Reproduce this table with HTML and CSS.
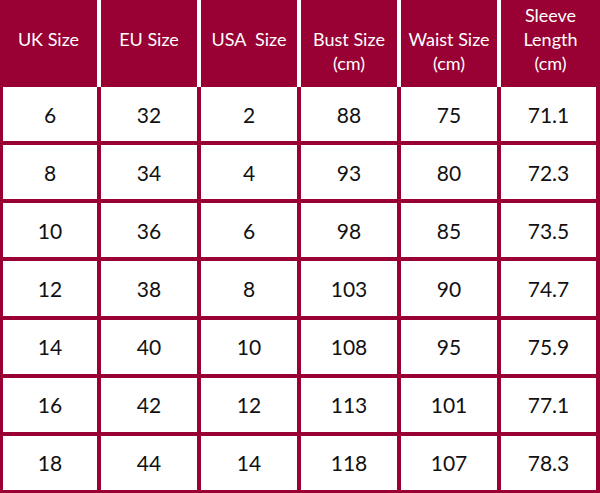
FILE: index.html
```html
<!DOCTYPE html>
<html lang="en">
<head>
<meta charset="utf-8">
<title>Size Chart</title>
<link rel="stylesheet" href="styles.css">
</head>
<body>
<div class="chart">
  <div class="head">
    <div class="hcell">UK Size</div>
    <div class="hcell">EU Size</div>
    <div class="hcell">USA&nbsp; Size</div>
    <div class="hcell hcell-low">Bust Size<br>(cm)</div>
    <div class="hcell hcell-low">Waist Size<br>(cm)</div>
    <div class="hcell">Sleeve<br>Length<br>(cm)</div>
  </div>
  <div class="body">
    <div class="cell">6</div><div class="cell">32</div><div class="cell">2</div><div class="cell">88</div><div class="cell">75</div><div class="cell">71.1</div>
    <div class="cell">8</div><div class="cell">34</div><div class="cell">4</div><div class="cell">93</div><div class="cell">80</div><div class="cell">72.3</div>
    <div class="cell">10</div><div class="cell">36</div><div class="cell">6</div><div class="cell">98</div><div class="cell">85</div><div class="cell">73.5</div>
    <div class="cell">12</div><div class="cell">38</div><div class="cell">8</div><div class="cell">103</div><div class="cell">90</div><div class="cell">74.7</div>
    <div class="cell">14</div><div class="cell">40</div><div class="cell">10</div><div class="cell">108</div><div class="cell">95</div><div class="cell">75.9</div>
    <div class="cell">16</div><div class="cell">42</div><div class="cell">12</div><div class="cell">113</div><div class="cell">101</div><div class="cell">77.1</div>
    <div class="cell">18</div><div class="cell">44</div><div class="cell">14</div><div class="cell">118</div><div class="cell">107</div><div class="cell">78.3</div>
  </div>
</div>
</body>
</html>
```
FILE: styles.css
```css
html, body {
  margin: 0;
  padding: 0;
  background: #ffffff;
}

.chart {
  width: 600px;
  height: 493px;
  display: flex;
  flex-direction: column;
  font-family: Lato, "Open Sans", "DejaVu Sans", sans-serif;
}

.head {
  display: grid;
  grid-template-columns: 97px 96px 96px 96px 96px 99px;
  column-gap: 4px;
  height: 87px;
  background: #ffffff;
}

.hcell {
  background: #990033;
  color: #ffffff;
  display: flex;
  flex-direction: column;
  justify-content: center;
  text-align: center;
  font-size: 18px;
  line-height: 24px;
  padding: 3px 0 12px;
  box-sizing: border-box;
}

.hcell-low {
  justify-content: flex-end;
}

.body {
  flex: 1;
  display: grid;
  grid-template-columns: 94px 96px 96px 96px 96px 95px;
  grid-template-rows: repeat(7, 1fr);
  gap: 4px;
  padding: 0 4px 3px 3px;
  background: #990033;
}

.cell {
  background: #ffffff;
  color: #111111;
  display: flex;
  align-items: center;
  justify-content: center;
  font-size: 21px;
}
```
